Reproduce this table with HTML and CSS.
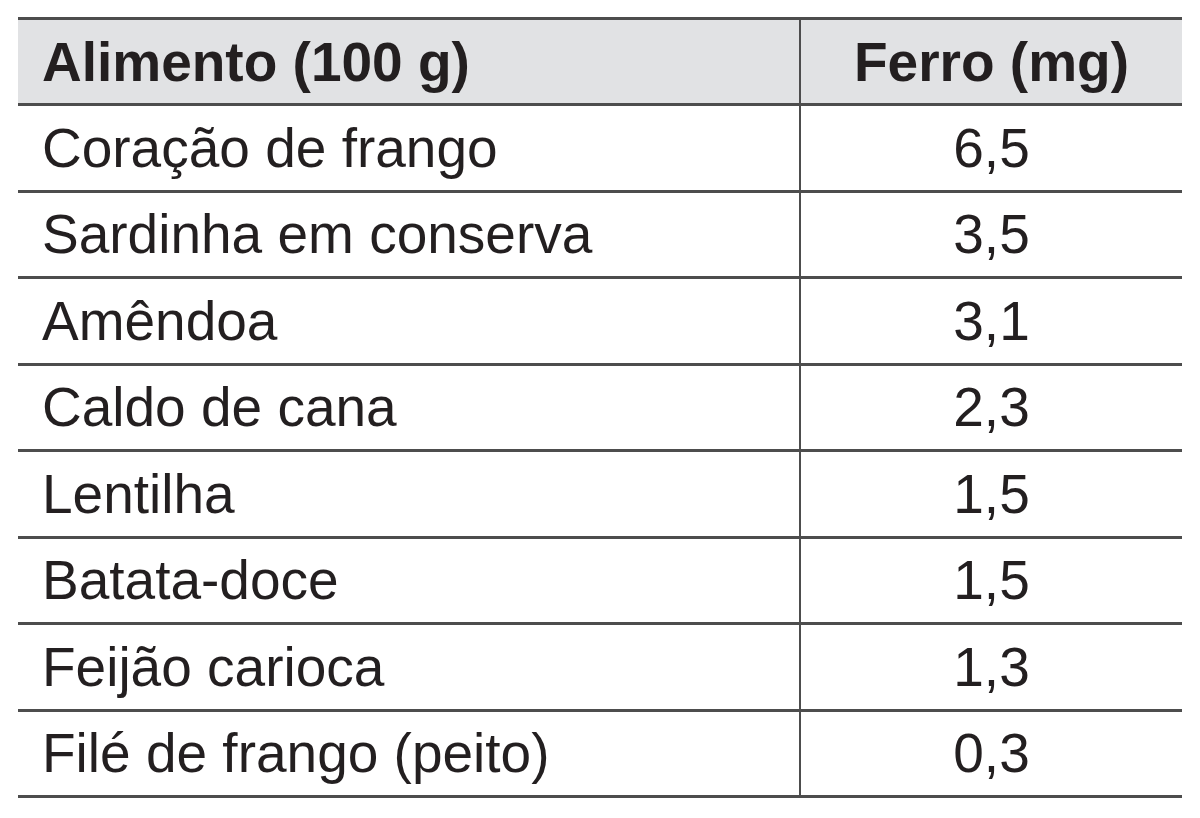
FILE: index.html
```html
<!DOCTYPE html>
<html lang="pt">
<head>
<meta charset="utf-8">
<title>Ferro nos alimentos</title>
<link rel="stylesheet" href="styles.css">
</head>
<body>
<table class="tabela">
  <thead>
    <tr>
      <th class="col-alimento">Alimento (100 g)</th>
      <th class="col-ferro">Ferro (mg)</th>
    </tr>
  </thead>
  <tbody>
    <tr><td class="col-alimento">Coração de frango</td><td class="col-ferro">6,5</td></tr>
    <tr><td class="col-alimento">Sardinha em conserva</td><td class="col-ferro">3,5</td></tr>
    <tr><td class="col-alimento">Amêndoa</td><td class="col-ferro">3,1</td></tr>
    <tr><td class="col-alimento">Caldo de cana</td><td class="col-ferro">2,3</td></tr>
    <tr><td class="col-alimento">Lentilha</td><td class="col-ferro">1,5</td></tr>
    <tr><td class="col-alimento">Batata-doce</td><td class="col-ferro">1,5</td></tr>
    <tr><td class="col-alimento">Feijão carioca</td><td class="col-ferro">1,3</td></tr>
    <tr><td class="col-alimento">Filé de frango (peito)</td><td class="col-ferro">0,3</td></tr>
  </tbody>
</table>
</body>
</html>
```
FILE: styles.css
```css
html, body {
  margin: 0;
  padding: 0;
  background: #ffffff;
}
body {
  padding: 17px 18px 0 18px;
  font-family: "Liberation Sans", Arial, sans-serif;
  color: #231f20;
}
.tabela {
  width: 1164px;
  border-collapse: separate;
  border-spacing: 0;
  border-top: 3px solid #4d4d4d;
  table-layout: fixed;
}
.tabela th,
.tabela td {
  box-sizing: border-box;
  height: 86.5px;
  padding: 0;
  border-bottom: 3px solid #4d4d4d;
  font-size: 55px;
  line-height: 60px;
  vertical-align: middle;
}
.tabela thead th {
  height: 86px;
  background: #e1e2e4;
  font-weight: bold;
}
.col-alimento {
  width: 781px;
  text-align: left;
  padding-left: 24px !important;
}
.col-ferro {
  text-align: center;
  border-left: 2px solid #4d4d4d;
}
```
